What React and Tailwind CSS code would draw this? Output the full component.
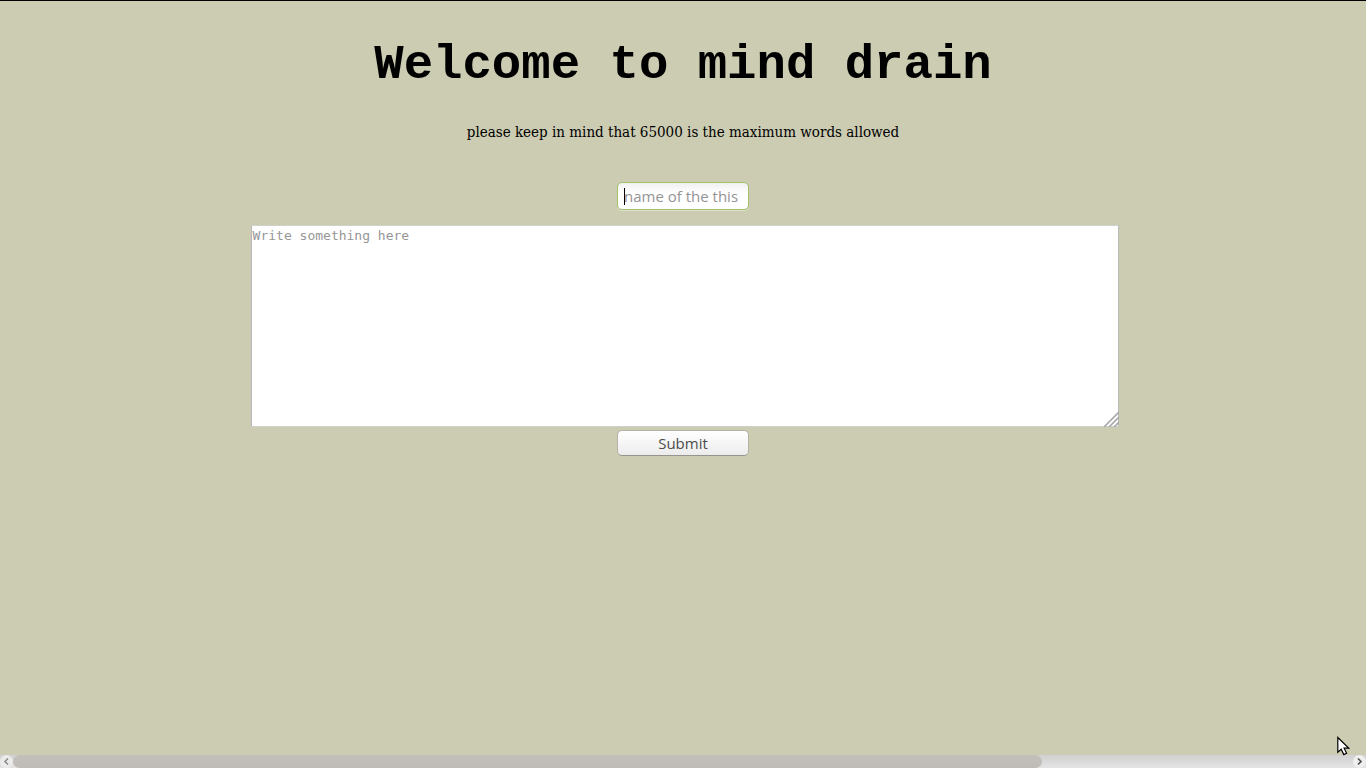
import React from "react";

function ResizeGrip() {
  return (
    <svg
      className="pointer-events-none absolute right-0 bottom-0 size-4"
      viewBox="0 0 16 16"
      fill="none"
      stroke="#a9a9ac"
      strokeWidth="1.7"
      aria-hidden="true"
    >
      <path d="M1 16 16 1M6 16 16 6M11 16 16 11" />
    </svg>
  );
}

function ScrollBar() {
  return (
    <div className="flex h-[13px] shrink-0 bg-linear-to-b from-[#d0d0d1] to-[#e4e4e4]">
      <button
        type="button"
        aria-label="Scroll left"
        className="flex w-[13px] shrink-0 items-center justify-center rounded-full bg-[#ebebeb]"
      >
        <svg className="size-[13px]" viewBox="0 0 13 13" fill="none" stroke="#8a8a8a" strokeWidth="1.5" aria-hidden="true">
          <path d="M8 3.5 5 6.5 8 9.5" />
        </svg>
      </button>
      <div className="grow">
        <div className="h-full w-[76.8%] rounded-full bg-linear-to-b from-[#c4bfbb] to-[#bfbbb7]" />
      </div>
      <button
        type="button"
        aria-label="Scroll right"
        className="flex w-[13px] shrink-0 items-center justify-center rounded-full bg-[#efefef]"
      >
        <svg className="size-[13px]" viewBox="0 0 13 13" fill="none" stroke="#505050" strokeWidth="1.7" aria-hidden="true">
          <path d="M5 3.5 8 6.5 5 9.5" />
        </svg>
      </button>
    </div>
  );
}

function Pointer() {
  return (
    <svg
      className="pointer-events-none absolute right-4 bottom-3 h-5 w-[13px]"
      viewBox="0 0 13 20"
      fill="#fff"
      stroke="#000"
      strokeWidth="1.2"
      aria-hidden="true"
    >
      <path d="M.8 1.5V16.2L4.2 13.2 6.8 18.6 9.6 17.3 7.1 12.2H11.9Z" />
    </svg>
  );
}

export default function App() {
  return (
    <div className="relative flex min-h-screen flex-col border-t border-black bg-[#ccccb2] text-black">
      <main className="flex grow flex-col items-center">
        <h1 className="mt-9 text-center font-['Liberation_Mono',monospace] text-[49px] leading-[56px] font-bold">
          Welcome to mind drain
        </h1>
        <p className="mt-[29px] text-center font-['DejaVu_Serif_Condensed','DejaVu_Serif',serif] text-[15px] leading-5">
          please keep in mind that 65000 is the maximum words allowed
        </p>
        <form className="mt-10 flex w-full flex-col items-center" onSubmit={(e) => e.preventDefault()}>
          <div className="relative">
            <input
              type="text"
              aria-label="Name"
              placeholder="name of the this"
              className="block h-7 w-[132px] rounded-[5px] border border-[#a4c169] bg-linear-to-b from-[#f1f1f1] to-white to-40% px-1.5 font-['Open_Sans',sans-serif] text-[15px] shadow-[0_1px_0_#dedece] outline-none placeholder:text-[#949494]"
            />
            <span className="absolute top-1.5 left-[7px] h-[17px] w-px bg-black" aria-hidden="true" />
          </div>
          <div className="relative mt-[15px] ml-1 w-[63.6%]">
            <textarea
              aria-label="Text"
              placeholder="Write something here"
              className="block h-[202px] w-full resize-none border border-[#b9b9b9] border-t-[#d0d0cc] border-b-[#d0d0cc] bg-white px-px py-0.5 font-['DejaVu_Sans_Mono',monospace] text-[13px] leading-4 outline-none placeholder:text-[#969696]"
            />
            <ResizeGrip />
          </div>
          <button
            type="submit"
            className="mt-[3px] h-[26px] w-[132px] rounded-[5px] border border-[#b5b3a7] border-b-[#96948f] bg-linear-to-b from-white to-[#ececec] font-['Open_Sans',sans-serif] text-[15px] leading-5 text-[#4c4c4c]"
          >
            Submit
          </button>
        </form>
      </main>
      <ScrollBar />
      <Pointer />
    </div>
  );
}
